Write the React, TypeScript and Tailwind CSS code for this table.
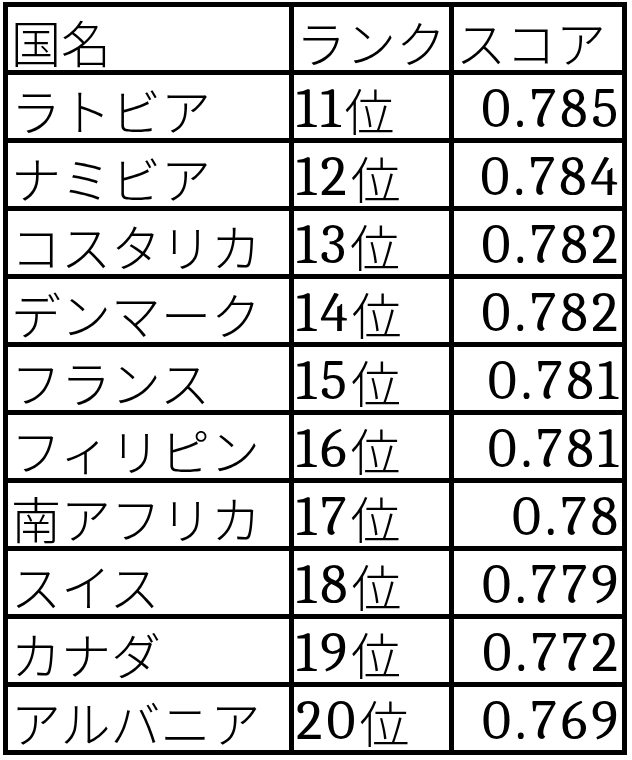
const rows = [
  ["ラトビア", "11", "0.785"],
  ["ナミビア", "12", "0.784"],
  ["コスタリカ", "13", "0.782"],
  ["デンマーク", "14", "0.782"],
  ["フランス", "15", "0.781"],
  ["フィリピン", "16", "0.781"],
  ["南アフリカ", "17", "0.78"],
  ["スイス", "18", "0.779"],
  ["カナダ", "19", "0.772"],
  ["アルバニア", "20", "0.769"],
];

function Jp({ children }: { children: React.ReactNode }) {
  return <span className="font-light text-[50px] leading-none">{children}</span>;
}

function Num({ children }: { children: React.ReactNode }) {
  return <span className="font-serif font-light text-[56px] leading-none tracking-[4px]">{children}</span>;
}

export default function App() {
  return (
    <div className="w-[632px] h-[760px] bg-white pt-[2px] pl-[3px] font-[Noto_Sans_CJK_JP,sans-serif]">
      <div className="inline-grid grid-cols-[281px_155px_168px] auto-rows-[63px] gap-[5px] p-[5px] bg-black text-black">
        <div className="bg-white flex items-center pl-[3px] pt-[4px]"><Jp>国名</Jp></div>
        <div className="bg-white flex items-center pl-[2px] pt-[4px]"><Jp>ランク</Jp></div>
        <div className="bg-white flex items-center pl-[2px] pt-[4px]"><Jp>スコア</Jp></div>
        {rows.map(([name, rank, score]) => (
          <>
            <div key={name} className="bg-white flex items-center pl-[3px] pt-[4px]"><Jp>{name}</Jp></div>
            <div key={name + "r"} className="bg-white flex items-center pl-[2px] pt-[4px]">
              <Num>{rank}</Num>
              <Jp>位</Jp>
            </div>
            <div key={name + "s"} className="bg-white flex items-center justify-end pr-0 pt-[4px]">
              <Num>{score}</Num>
            </div>
          </>
        ))}
      </div>
    </div>
  );
}
